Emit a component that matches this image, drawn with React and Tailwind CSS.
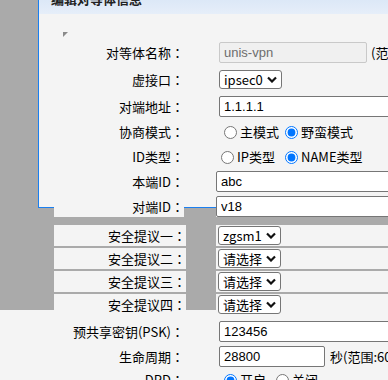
import React from 'react';

const cjk = "font-['Noto_Sans_CJK_SC',sans-serif]";

function Chevron() {
    return (
        <svg width="10" height="7" viewBox="0 0 10 7" className="ml-auto mr-[4px]">
            <path d="M1 1.5l4 4 4-4" fill="none" stroke="#111" strokeWidth="2.2" />
        </svg>
    );
}

function Select({ value }) {
    return (
        <div className={`flex items-center w-[63px] h-[19px] bg-white border border-[#767676] rounded-[3px] pl-[4px] text-[13px] text-black ${cjk}`}>
            <span className="leading-none">{value}</span>
            <Chevron />
        </div>
    );
}

function TextBox({ value, width = 'w-[260px]', disabled }) {
    return (
        <input
            readOnly
            value={value}
            className={`${width} h-[21px] shrink-0 rounded-[2px] border px-[4px] text-[13px] outline-none font-['Liberation_Sans',sans-serif] ${disabled ? 'border-[#c9c9c9] bg-[#f0f0f0] text-[#6d6d6d]' : 'border-[#767676] bg-white text-black'}`}
        />
    );
}

function Radio({ checked, label, gap }) {
    return (
        <label className={`flex items-center ${gap}`}>
            <input type="radio" readOnly checked={checked} className="m-0 w-[13px] h-[13px] accent-[#0075ff]" />
            <span className="ml-[3px] text-[13px] text-black">{label}</span>
        </label>
    );
}

function Row({ label, mt, h = 'h-[21px]', lw = 'w-[130px]', gw = 'w-[32px]', pl = 'pl-[3px]', children }) {
    return (
        <div className={`flex ${mt} ${h}`}>
            <div className={`${lw} shrink-0 bg-[#f4f4f4] flex items-center justify-end text-[13px] text-black whitespace-nowrap ${cjk}`}>
                {label}
                <span className="font-['Noto_Sans_CJK_TC',sans-serif]">：</span>
            </div>
            <div className={`${gw} shrink-0`} />
            <div className={`flex-1 bg-[#f4f4f4] flex items-center whitespace-nowrap ${pl} ${cjk}`}>
                {children}
            </div>
        </div>
    );
}

export default function App() {
    return (
        <div className="relative w-[388px] h-[380px] overflow-hidden bg-[#aaaaaa]">
            {/* upper panel */}
            <div className="absolute left-[38px] top-0 right-0 h-[208px] bg-[#f4f4f4] border-l border-b border-[#1a7ff0]">
                <div className="h-[14px] bg-gradient-to-b from-[#dce8f7] to-[#e6eef9] overflow-hidden">
                    <div className={`mt-[-11px] ml-[12px] text-[13px] font-bold text-[#222] ${cjk}`}>编辑对等体信息</div>
                </div>
                <svg width="5" height="5" viewBox="0 0 5 5" className="ml-[24px] mt-[18px]">
                    <polygon points="0,0 5,0 0,5" fill="#8a8a8a" />
                </svg>
            </div>
            {/* lower panel */}
            <div className="absolute left-0 right-0 top-[310px] bottom-0 bg-[#f4f4f4]" />

            <div className="relative pl-[54px] flex flex-col">
                <Row label="对等体名称" mt="mt-[42px]">
                    <TextBox value="unis-vpn" width="w-[148px]" disabled />
                    <span className="ml-[4px] text-[13px] text-black">(范围:1-31个字符)</span>
                </Row>
                <Row label="虚接口" mt="mt-[6px]">
                    <Select value="ipsec0" />
                </Row>
                <Row label="对端地址" mt="mt-[6px]">
                    <TextBox value="1.1.1.1" />
                </Row>
                <Row label="协商模式" mt="mt-[4px]" h="h-[22px]" pl="pl-[8px]">
                    <Radio label="主模式" />
                    <Radio checked label="野蛮模式" gap="ml-[6px]" />
                </Row>
                <Row label="ID类型" mt="mt-[3px]" h="h-[22px]" pl="pl-[5px]">
                    <Radio label="IP类型" />
                    <Radio checked label="NAME类型" gap="ml-[10px]" />
                </Row>
                <Row label="本端ID" mt="mt-[3px]" pl="pl-0">
                    <TextBox value="abc" />
                </Row>
                <Row label="对端ID" mt="mt-[4px]" pl="pl-0">
                    <TextBox value="v18" />
                </Row>
                <Row label="安全提议一" mt="mt-[8px]" lw="w-[132px]" gw="w-[30px]" pl="pl-[2px]">
                    <Select value="zgsm1" />
                </Row>
                <Row label="安全提议二" mt="mt-[2px]" lw="w-[132px]" gw="w-[30px]" pl="pl-[2px]">
                    <Select value="请选择" />
                </Row>
                <Row label="安全提议三" mt="mt-[2px]" lw="w-[132px]" gw="w-[30px]" pl="pl-[2px]">
                    <Select value="请选择" />
                </Row>
                <Row label="安全提议四" mt="mt-[2px]" lw="w-[132px]" gw="w-[30px]" pl="pl-[2px]">
                    <Select value="请选择" />
                </Row>
                <Row label="预共享密钥(PSK)" mt="mt-[6px]">
                    <TextBox value="123456" />
                </Row>
                <Row label="生命周期" mt="mt-[4px]">
                    <TextBox value="28800" width="w-[106px]" />
                    <span className="ml-[5px] text-[13px] text-black">秒(范围:60-604800)</span>
                </Row>
                <Row label="DPD" mt="mt-[2px]" h="h-[22px]" pl="pl-[8px]">
                    <Radio checked label="开启" />
                    <Radio label="关闭" gap="ml-[10px]" />
                </Row>
            </div>
        </div>
    );
}
